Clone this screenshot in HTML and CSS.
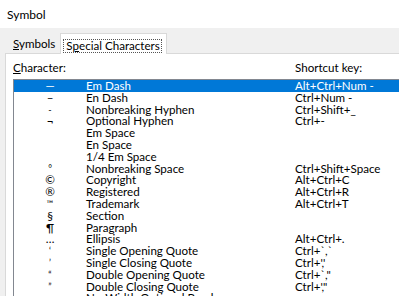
FILE: index.html
```html
<!DOCTYPE html>
<html lang="en">
<head>
  <meta charset="UTF-8">
  <meta name="viewport" content="width=device-width, initial-scale=1.0">
  <title>Symbol</title>
  <link rel="stylesheet" href="styles.css">
</head>
<body>
  <div class="titlebar">Symbol</div>
  <div class="dialog">
    <div class="tabs">
      <div class="tab"><u>S</u>ymbols</div>
      <div class="tab active"><span class="focus">S<u>p</u>ecial Characters</span></div>
    </div>
    <div class="panel">
      <div class="labels">
        <span class="label-char"><u>C</u>haracter:</span>
        <span class="label-key">Shortcut key:</span>
      </div>
      <div class="list">
        <div class="row selected"><span class="sym">—</span><span>Em Dash</span><span>Alt+Ctrl+Num -</span></div>
        <div class="row"><span class="sym">–</span><span>En Dash</span><span>Ctrl+Num -</span></div>
        <div class="row"><span class="sym small">-</span><span>Nonbreaking Hyphen</span><span>Ctrl+Shift+_</span></div>
        <div class="row"><span class="sym">¬</span><span>Optional Hyphen</span><span>Ctrl+-</span></div>
        <div class="row"><span class="sym"></span><span>Em Space</span><span></span></div>
        <div class="row"><span class="sym"></span><span>En Space</span><span></span></div>
        <div class="row"><span class="sym"></span><span>1/4 Em Space</span><span></span></div>
        <div class="row"><span class="sym small">°</span><span>Nonbreaking Space</span><span>Ctrl+Shift+Space</span></div>
        <div class="row"><span class="sym">©</span><span>Copyright</span><span>Alt+Ctrl+C</span></div>
        <div class="row"><span class="sym">®</span><span>Registered</span><span>Alt+Ctrl+R</span></div>
        <div class="row"><span class="sym small">™</span><span>Trademark</span><span>Alt+Ctrl+T</span></div>
        <div class="row"><span class="sym">§</span><span>Section</span><span></span></div>
        <div class="row"><span class="sym">¶</span><span>Paragraph</span><span></span></div>
        <div class="row"><span class="sym">…</span><span>Ellipsis</span><span>Alt+Ctrl+.</span></div>
        <div class="row"><span class="sym small">‘</span><span>Single Opening Quote</span><span>Ctrl+`,`</span></div>
        <div class="row"><span class="sym small">’</span><span>Single Closing Quote</span><span>Ctrl+','</span></div>
        <div class="row"><span class="sym small">“</span><span>Double Opening Quote</span><span>Ctrl+`,"</span></div>
        <div class="row"><span class="sym small">”</span><span>Double Closing Quote</span><span>Ctrl+',"</span></div>
        <div class="row"><span class="sym"></span><span>No-Width Optional Break</span><span></span></div>
      </div>
    </div>
  </div>
</body>
</html>
```

FILE: styles.css
```css
body {
  margin: 0;
  font-family: Lato, "Open Sans", sans-serif;
  font-size: 11.6px;
  color: #000000;
  background-color: #ffffff;
  overflow: hidden;
}

.titlebar {
  height: 28px;
  line-height: 29px;
  padding-left: 7px;
  font-size: 12px;
  background-color: #ffffff;
}

.dialog {
  background-color: #f0f0f0;
  padding-left: 5px;
  height: 268px;
}

.tabs {
  display: flex;
  align-items: flex-end;
  height: 25px;
}

.tab {
  padding: 0 5px 0 8px;
  height: 16px;
  line-height: 14px;
}

.tab.active {
  background-color: #ffffff;
  border: 1px solid #d9d9d9;
  border-bottom: none;
  height: 20px;
  padding: 0 4px 0 2px;
  margin-bottom: -1px;
  line-height: 20px;
}

.focus {
  display: inline-block;
  border: 1px dotted #555555;
  line-height: 11px;
  padding: 0 1px 1px 2px;
  margin-top: 5px;
  vertical-align: top;
}

.panel {
  background-color: #ffffff;
  border-top: 1px solid #d9d9d9;
  border-left: 1px solid #d9d9d9;
  padding-left: 7px;
  height: 243px;
}

.labels {
  display: flex;
  height: 25px;
  align-items: flex-end;
}

.label-char {
  width: 282px;
  line-height: 14px;
  padding-bottom: 4px;
}

.label-key {
  line-height: 14px;
  padding-bottom: 4px;
}

.list {
  border-top: 1px solid #828790;
  border-left: 1px solid #828790;
}

.row {
  display: grid;
  grid-template-columns: 72px 209px 1fr;
  height: 11.8px;
  line-height: 11px;
  white-space: nowrap;
}

.row.selected {
  background-color: #0078d7;
  color: #ffffff;
}

.sym {
  text-align: center;
}

.sym.small {
  font-size: 9px;
}

u {
  text-decoration-thickness: 1px;
  text-underline-offset: 1px;
}
```
